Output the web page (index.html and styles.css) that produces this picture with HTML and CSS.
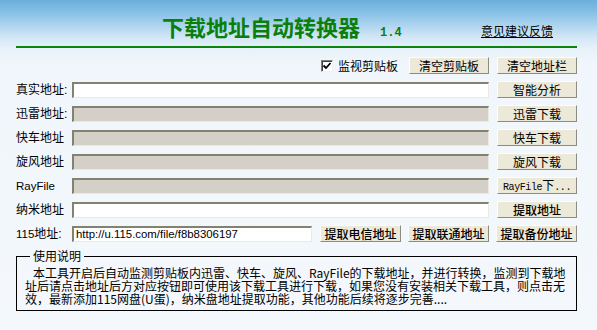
FILE: index.html
```html
<!DOCTYPE html>
<html lang="zh-CN">
<head>
<meta charset="utf-8">
<title>下载地址自动转换器</title>
<link rel="stylesheet" href="styles.css">
</head>
<body>
<div class="app">
  <header class="header">
    <h1 class="title">下载地址自动转换器</h1>
    <span class="ver">1.4</span>
    <a class="feedback" href="#">意见建议反馈</a>
  </header>

  <div class="toolbar">
    <label class="chk">
      <span class="box"><svg width="10" height="10" viewBox="0 0 10 10"><path d="M1.5 4.5 L4 7 L8.5 2" fill="none" stroke="#000" stroke-width="1.8"/></svg></span>
      监视剪贴板
    </label>
    <button class="btn">清空剪贴板</button>
    <button class="btn">清空地址栏</button>
  </div>

  <div class="row">
    <span class="lbl">真实地址:</span>
    <div class="field"></div>
    <button class="btn">智能分析</button>
  </div>
  <div class="row">
    <span class="lbl">迅雷地址:</span>
    <div class="field off"></div>
    <button class="btn">迅雷下载</button>
  </div>
  <div class="row">
    <span class="lbl">快车地址</span>
    <div class="field off"></div>
    <button class="btn">快车下载</button>
  </div>
  <div class="row">
    <span class="lbl">旋风地址</span>
    <div class="field off"></div>
    <button class="btn">旋风下载</button>
  </div>
  <div class="row">
    <span class="lbl"><span class="lat">RayFile</span></span>
    <div class="field off"></div>
    <button class="btn mono">RayFile<span class="cjk">下</span>...</button>
  </div>
  <div class="row">
    <span class="lbl">纳米地址</span>
    <div class="field"></div>
    <button class="btn strong">提取地址</button>
  </div>
  <div class="row">
    <span class="lbl"><span class="lat">115</span>地址:</span>
    <div class="field short">http://u.115.com/file/f8b8306197</div>
    <div class="btns">
      <button class="btn wide strong">提取电信地址</button>
      <button class="btn wide strong">提取联通地址</button>
      <button class="btn wide strong">提取备份地址</button>
    </div>
  </div>

  <fieldset class="group">
    <legend>使用说明</legend>
    <p class="desc"><span class="line first">本工具开启后自动监测剪贴板内迅雷、快车、旋风、RayFile的下载地址，并进行转换，监测到下载地</span><span class="line">址后请点击地址后方对应按钮即可使用该下载工具进行下载，如果您没有安装相关下载工具，则点击无</span><span class="line">效，最新添加115网盘(U蛋)，纳米盘地址提取功能，其他功能后续将逐步完善....</span></p>
  </fieldset>
</div>
</body>
</html>
```

FILE: styles.css
```css
* { box-sizing: border-box; }

html, body {
  margin: 0;
  height: 100%;
}

body {
  overflow: hidden;
  font-family: "Noto Sans CJK SC", sans-serif;
  font-size: 12px;
  color: #000;
  background: linear-gradient(to bottom,
    #6cafdc 0px, #86bfe5 12px, #a9d2ee 24px, #cfe5f5 36px,
    #e6f1f9 48px, #f0f6fb 62px, #f4f8fc 100%);
}

.app {
  width: 561px;
  margin-left: 16px;
}

.header {
  display: flex;
  align-items: baseline;
  height: 48px;
  padding-top: 14px;
  border-bottom: 2px solid #0a840a;
}

.title {
  margin: 0 0 0 146px;
  font-size: 22px;
  line-height: 24px;
  font-weight: bold;
  color: #0b7f0b;
}

.ver {
  margin-left: 20px;
  font-family: "Liberation Mono", monospace;
  font-weight: bold;
  font-size: 12px;
  color: #0b7f0b;
}

.feedback {
  margin-left: auto;
  margin-right: 24px;
  font-size: 12px;
  color: #000;
  text-decoration: underline;
}

.toolbar {
  display: flex;
  justify-content: flex-end;
  align-items: center;
  gap: 8px;
  height: 17px;
  margin-top: 9px;
}

.chk {
  display: flex;
  align-items: center;
  gap: 5px;
  margin-right: 3px;
  line-height: 12px;
}

.box {
  display: flex;
  align-items: center;
  justify-content: center;
  width: 12px;
  height: 12px;
  background: #fff;
  border: 1px solid;
  border-color: #7f7f7f #f0f0f0 #f0f0f0 #7f7f7f;
  box-shadow: inset 1px 1px 0 #404040;
}

.btn {
  width: 80px;
  height: 17px;
  padding: 0;
  font-family: "Noto Sans CJK SC", sans-serif;
  font-size: 12px;
  line-height: 14px;
  color: #000;
  background: #ece9d8;
  border: 1px solid;
  border-color: #fefefc #8e8c80 #8e8c80 #fefefc;
}

.btn.wide { width: 81px; }

.btn.strong { font-weight: 500; }

.btn.mono {
  font-family: "Liberation Mono", monospace;
  font-size: 10px;
  letter-spacing: -0.4px;
}

.cjk {
  font-family: "Noto Sans CJK SC", sans-serif;
  font-size: 12px;
  letter-spacing: 0;
}

.row {
  display: flex;
  align-items: center;
  height: 17px;
  margin-top: 7px;
}

.lbl {
  width: 56px;
  flex: none;
  font-family: "Liberation Sans", "Noto Sans CJK SC", sans-serif;
  font-size: 12px;
  line-height: 14px;
  white-space: nowrap;
}

.lat { font-size: 11.5px; }

.field {
  flex: 1;
  height: 16px;
  margin-right: 8px;
  padding: 0 0 0 2px;
  background: #fff;
  border-style: solid;
  border-width: 2px 1px 1px 2px;
  border-color: #83816f #ebe9e1 #ebe9e1 #83816f;
  font-family: "Liberation Sans", sans-serif;
  font-size: 11.4px;
  line-height: 13px;
  white-space: nowrap;
  overflow: hidden;
}

.field.off { background: #d4d0c8; }

.field.short {
  flex: 0 0 240px;
}

.btns {
  display: flex;
  gap: 7px;
}

.group {
  margin: 8px 0 0;
  padding: 4px 8px 5px;
  border: 1px solid #000;
  min-width: 0;
}

.group legend {
  margin-left: 5px;
  padding: 0 3px;
  font-size: 12px;
  line-height: 12px;
}

.desc {
  margin: 0;
  font-size: 12px;
  white-space: nowrap;
}

.line {
  display: block;
  line-height: 13px;
}

.line.first { padding-left: 8px; }
```
